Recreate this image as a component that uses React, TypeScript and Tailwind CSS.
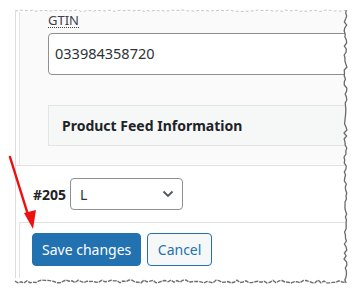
import React from "react";

const jag = (len: number, seed: number, amp: number) => {
  const pts: number[] = [];
  let s = seed;
  for (let i = 0; i <= len; i += 3) {
    s = (s * 9301 + 49297) % 233280;
    pts.push((s / 233280) * amp);
  }
  return pts;
};

const TornEdge = () => {
  const top = jag(330, 7, 1.5).map((d, i) => `${15 + i * 3},${10 + d}`).join(" ");
  const right = jag(273, 13, 3).map((d, i) => `${344 + d},${10 + i * 3}`).join(" ");
  const bottom = jag(332, 29, 3).map((d, i) => `${15 + i * 3},${280 + d}`).join(" ");
  return (
    <svg className="absolute inset-0 pointer-events-none" width={357} height={293}>
      <polyline points={top} fill="none" stroke="#c4c4c4" strokeWidth={1} strokeDasharray="3 2" />
      <polyline points={right} fill="none" stroke="#6a6a6a" strokeWidth={1.3} />
      <polyline points={bottom} fill="none" stroke="#6e6e6e" strokeWidth={1.4} strokeDasharray="4 1" />
    </svg>
  );
};

const Arrow = () => (
  <svg className="absolute inset-0 pointer-events-none" width={357} height={293}>
    <line x1={10} y1={157} x2={29} y2={218} stroke="#ee1111" strokeWidth={2.5} strokeLinecap="round" />
    <polygon points="33,229 24,213 36,210" fill="#ee1111" />
  </svg>
);

export default function App() {
  return (
    <div
      className="relative w-[357px] h-[293px] overflow-hidden bg-white text-[#1d2327]"
      style={{ fontFamily: '"Noto Sans", "Open Sans", sans-serif' }}
    >
      <div className="pt-[12px] pl-[15px]">
        <div className="w-[330px] h-[266px] overflow-hidden border-l border-[#dcdcde] flex flex-col">
          <div className="ml-[3px] h-[153px] shrink-0 border-l border-[#e6e6e6] bg-[#fafafa] pl-[28px] pt-[2px]">
            <div className="w-fit text-[13px] leading-[13px] text-[#3c434a] border-b border-dotted border-[#3c434a]">
              GTIN
            </div>
            <div className="mt-[5px] w-[340px] h-[42px] rounded-[4px] border border-[#8c8f94] bg-white flex items-center pl-[6px] text-[14.5px] text-[#2c3338]">
              033984358720
            </div>
            <div className="mt-[30px] w-[320px] h-[41px] border border-[#e4e4e4] bg-[#f6f7f7] flex items-center pl-[13px] text-[14px] font-bold text-[#1d2327]">
              Product Feed Information
            </div>
          </div>
          <div className="h-[57px] shrink-0 border-t border-[#e2e2e2] bg-white flex items-center pl-[17px] gap-[4px]">
            <span className="text-[14px] font-bold">#205</span>
            <div className="w-[113px] h-[32px] rounded-[4px] border border-[#8c8f94] bg-white flex items-center justify-between pl-[9px] pr-[8px] text-[14px] text-[#2c3338]">
              <span>L</span>
              <svg width="12" height="8" viewBox="0 0 12 8">
                <path d="M1.5 1.5 L6 6 L10.5 1.5" fill="none" stroke="#50575e" strokeWidth="1.8" />
              </svg>
            </div>
          </div>
          <div className="ml-[3px] h-[56px] shrink-0 border-t border-l border-[#e2e2e2] bg-white flex items-center pl-[12px] gap-[6px] pb-[2px]">
            <button className="h-[33px] px-[9px] rounded-[4px] bg-[#2271b1] border border-[#2271b1] text-white text-[14px]">
              Save changes
            </button>
            <button className="h-[33px] px-[9.5px] rounded-[4px] bg-[#f6f7f7] border border-[#2271b1] text-[#2271b1] text-[14px]">
              Cancel
            </button>
          </div>
          <div className="border-t border-[#dcdcde]" />
        </div>
      </div>
      <TornEdge />
      <Arrow />
    </div>
  );
}
